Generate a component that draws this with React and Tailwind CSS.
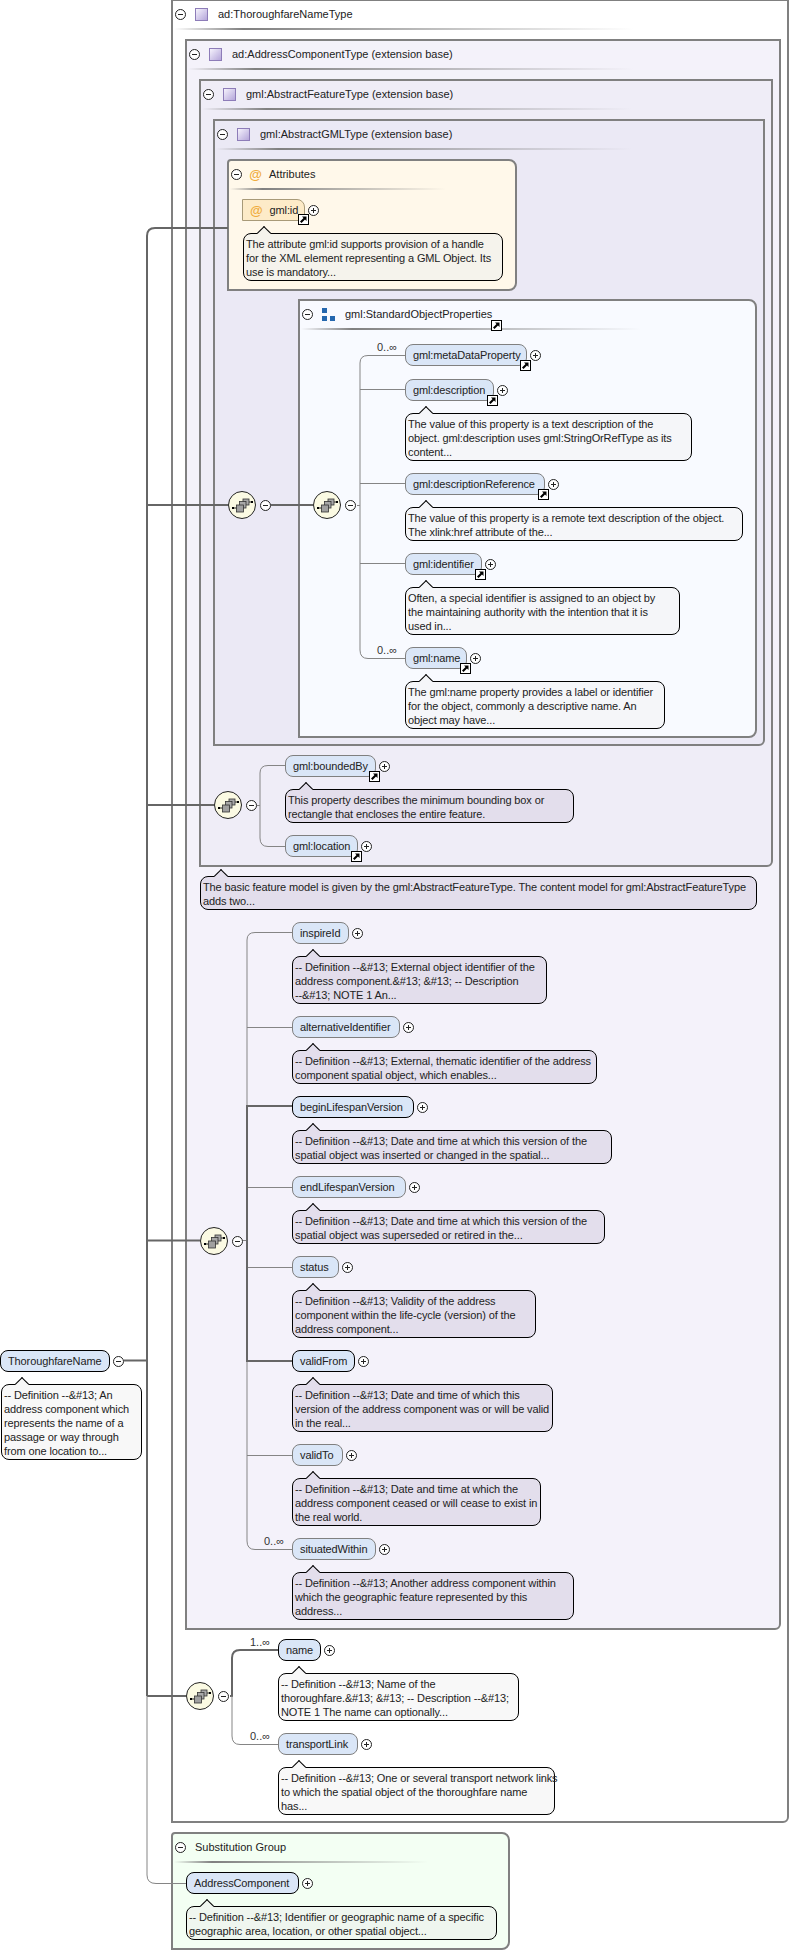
import React from "react";

function Toggle({ plus, className = "" }) {
  return (
    <svg width="11" height="11" viewBox="0 0 11 11" className={"shrink-0 " + className}>
      <circle cx="5.5" cy="5.5" r="5" fill="#ffffff" stroke="#222222" strokeWidth="1" />
      <path d="M3 5.5H8" stroke="#222222" strokeWidth="1" />
      {plus && <path d="M5.5 3V8" stroke="#222222" strokeWidth="1" />}
    </svg>
  );
}

function Shortcut({ className = "" }) {
  return (
    <svg width="11" height="11" viewBox="0 0 11 11" className={className}>
      <rect x="0.5" y="0.5" width="10" height="10" fill="#ffffff" stroke="#000000" />
      <path d="M4 2.5H8.5V7L7 5.5L3.5 9L2 7.5L5.5 4Z" fill="#000000" />
    </svg>
  );
}

function TypeIcon() {
  return (
    <span className="block h-[13px] w-[13px] shrink-0 border border-[#8d7cb8] bg-gradient-to-br from-[#f6f3fc] to-[#b5a6da]" />
  );
}

function GroupIcon() {
  return (
    <svg width="13" height="13" viewBox="0 0 13 13" className="shrink-0">
      <rect x="0" y="0" width="5" height="5" fill="#2467ae" />
      <rect x="0" y="8" width="5" height="5" fill="#2467ae" />
      <rect x="8" y="8" width="5" height="5" fill="#2467ae" />
    </svg>
  );
}

function Header({ icon, title, sep, arrow, gap = "gap-[10px]" }) {
  return (
    <div className="h-[38px]">
      <div className="relative flex h-[26px] items-center">
        <Toggle className="ml-[2px]" />
        <div className={"ml-[9px] flex items-center " + gap}>
          {icon}
          <span className="whitespace-pre pt-[1px] text-[11px] text-[#222222]">{title}</span>
          {arrow}
        </div>
      </div>
      <div className={"ml-[1px] mt-[1px] h-[2px] bg-gradient-to-r from-transparent via-[#808080] via-[15%] to-transparent " + sep} />
    </div>
  );
}

function Desc({ text, width, fill }) {
  return (
    <div className={"relative rounded-[8px] border border-black px-[2px] pb-[1px] pt-[3px] text-[11px] leading-[14px] tracking-[-0.12px] whitespace-pre text-[#222222] " + width + " " + fill}>
      <span className="absolute left-[15px] -top-[6px] h-[10px] w-[10px] rotate-45 border-l border-t border-black bg-inherit" />
      <span className="relative">{text}</span>
    </div>
  );
}

function Pill({ name, required, arrow, card, w }) {
  return (
    <div className="flex h-[22px] items-center">
      <div
        className={
          "relative flex h-[22px] items-center rounded-[8px] border bg-[#dae6f7] pl-[7px] pt-[1px] text-[11px] tracking-[-0.12px] whitespace-pre text-[#222222] " +
          w +
          " " +
          (required ? "border-black" : "border-[#808080]")
        }
      >
        {card && (
          <span className="absolute -left-[29px] -top-[5px] text-[11px] leading-[14px] tracking-normal text-[#333333]">{card}</span>
        )}
        {name}
        {arrow && <Shortcut className="absolute -right-[5px] -bottom-[6px]" />}
      </div>
      <Toggle plus className="ml-[3px]" />
    </div>
  );
}

function Item({ name, required, arrow, card, w, desc, width, fill, last, tight }) {
  return (
    <div className={last ? "" : tight ? "mb-[13px]" : "mb-[12px]"}>
      <Pill name={name} required={required} arrow={arrow} card={card} w={w} />
      {desc && (
        <div className="mt-[12px]">
          <Desc text={desc} width={width} fill={fill} />
        </div>
      )}
    </div>
  );
}

function Compositor({ className = "" }) {
  return (
    <div className={"flex shrink-0 items-center " + className}>
      <svg width="28" height="28" viewBox="0 0 28 28">
        <circle cx="14" cy="14" r="13.5" fill="#fbfae3" stroke="#222222" />
        <path d="M5 17H9M20 11H24" stroke="#222222" />
        <rect x="15" y="8" width="6" height="6" fill="#a8a8a8" stroke="#333333" strokeWidth="0.8" />
        <rect x="11.5" y="10.5" width="6.5" height="6.5" fill="#a8a8a8" stroke="#333333" strokeWidth="0.8" />
        <rect x="8.5" y="14" width="7" height="7" fill="#a0a0a0" stroke="#333333" strokeWidth="0.8" />
        <rect x="4" y="16" width="2" height="2" fill="#000000" />
        <rect x="23" y="10" width="2" height="2" fill="#000000" />
      </svg>
      <Toggle className="ml-[4px]" />
    </div>
  );
}

function Connectors() {
  const dark = { fill: "none", stroke: "#666666", strokeWidth: 2 };
  const thin = { fill: "none", stroke: "#858585", strokeWidth: 1 };
  return (
    <svg width="790" height="1952" className="pointer-events-none absolute left-0 top-0">
      {/* main trunk */}
      <path d="M124 1360.5H147M228 228H155Q147 228 147 236V1696" {...dark} />
      <path d="M147 505H228M147 805H214M147 1240.5H200M147 1696H186" {...dark} />
      <path d="M147 1696V1875Q147 1883.5 156 1883.5H186" {...thin} />
      {/* base type sequences */}
      <path d="M271 505H313" {...dark} />
      <path d="M357 505.5H360M405 355.5H368Q360 355.5 360 363V650Q360 658.5 368 658.5H405M360 389.5H405M360 483.5H405M360 563.5H405" {...thin} />
      <path d="M257 805.5H260M285 765.5H268Q260 765.5 260 773V838Q260 846.5 268 846.5H285" {...thin} />
      <path d="M243 1240.5H247M292 932.5H255Q247 932.5 247 940V1541Q247 1549.5 255 1549.5H292M247 1027.5H292M247 1187.5H292M247 1267.5H292M247 1455.5H292" {...thin} />
      <path d="M292 1106H247V1361H292" {...dark} />
      {/* own sequence */}
      <path d="M230 1696H232V1658Q232 1650 240 1650H278" {...dark} />
      <path d="M232 1696V1736Q232 1744.5 240 1744.5H278" {...thin} />
    </svg>
  );
}

const whiteNote = "bg-[#f8f8f8]";
const lilacNote = "bg-[#e3deec]";
const attrNote = "bg-[#f5f3ec]";
const sopNote = "bg-[#f5f6f9]";

export default function App() {
  return (
    <div className="relative flex h-[1952px] w-[790px] overflow-hidden bg-white [font-family:'Liberation_Sans',sans-serif]">
      {/* global element */}
      <div className="w-[171px] shrink-0 pt-[1350px]">
        <div className="flex h-[22px] items-center">
          <div className="flex h-[22px] w-[110px] items-center rounded-[8px] border border-black bg-[#dae6f7] pl-[7px] pt-[1px] text-[11px] tracking-[-0.12px] text-[#222222]">
            ThoroughfareName
          </div>
          <Toggle className="ml-[3px]" />
        </div>
        <div className="ml-[1px] mt-[12px]">
          <Desc
            width="w-[141px]"
            fill={whiteNote}
            text={"-- Definition --&#13; An\naddress component which\nrepresents the name of a\npassage or way through\nfrom one location to..."}
          />
        </div>
      </div>

      <div className="-mt-px shrink-0">
        {/* ad:ThoroughfareNameType */}
        <div className="w-[618px] rounded-br-[6px] border-2 border-[#808080] bg-white pb-[6px]">
          <Header icon={<TypeIcon />} title="ad:ThoroughfareNameType" sep="w-[460px]" />

          {/* ad:AddressComponentType */}
          <div className="ml-[12px] w-[596px] rounded-br-[6px] border-2 border-[#808080] bg-[#f4f2fa] pb-[8px]">
            <Header icon={<TypeIcon />} title="ad:AddressComponentType (extension base)" sep="w-[446px]" />

            {/* gml:AbstractFeatureType */}
            <div className="ml-[12px] w-[574px] rounded-br-[6px] border-2 border-[#808080] bg-[#efedf7] pb-[8px]">
              <Header icon={<TypeIcon />} title="gml:AbstractFeatureType (extension base)" sep="w-[430px]" />

              {/* gml:AbstractGMLType */}
              <div className="ml-[12px] w-[552px] rounded-br-[6px] border-2 border-[#808080] bg-[#ebe9f5] pb-[6px]">
                <Header icon={<TypeIcon />} title="gml:AbstractGMLType (extension base)" sep="w-[416px]" />

                {/* Attributes */}
                <div className="ml-[12px] h-[132px] w-[290px] rounded-tl-[4px] rounded-r-[8px] border-2 border-[#808080] bg-[#fff8ea]">
                  <Header
                    icon={<span className="-ml-[2px] w-[13px] shrink-0 text-center text-[13px] font-bold leading-none text-[#f0ac3c]">@</span>}
                    title="Attributes"
                    sep="w-[216px]"
                    gap="gap-[7px]"
                  />
                  <div className="ml-[13px] flex h-[22px] items-center">
                    <div className="relative flex h-[22px] w-[63px] items-center gap-[7px] rounded-tr-[8px] border border-[#a89a78] bg-[#fdebc8] pl-[7px] pt-[1px] text-[11px] tracking-[-0.12px] text-[#222222]">
                      <span className="text-[13px] font-bold leading-none text-[#f0ac3c]">@</span>
                      gml:id
                      <Shortcut className="absolute -right-[5px] -bottom-[5px]" />
                    </div>
                    <Toggle plus className="ml-[3px]" />
                  </div>
                  <div className="ml-[14px] mt-[12px]">
                    <Desc
                      width="w-[260px]"
                      fill={attrNote}
                      text={"The attribute gml:id supports provision of a handle\nfor the XML element representing a GML Object. Its\nuse is mandatory..."}
                    />
                  </div>
                </div>

                <div className="mt-[8px] flex items-start">
                  <Compositor className="ml-[13px] mt-[192px]" />

                  {/* gml:StandardObjectProperties */}
                  <div className="ml-[27px] w-[459px] rounded-tr-[8px] rounded-br-[8px] border-2 border-[#808080] bg-[#f8faff] pb-[7px]">
                    <Header
                      icon={<GroupIcon />}
                      title="gml:StandardObjectProperties"
                      sep="w-[340px]"
                      arrow={<Shortcut className="-ml-[11px] mt-[23px]" />}
                    />
                    <div className="flex items-start">
                      <Compositor className="ml-[13px] mt-[152px]" />
                      <div className="ml-[49px] pt-[5px]">
                        <Item tight arrow name="gml:metaDataProperty" card="0..∞" w="w-[122px]" />
                        <Item
                          arrow
                          name="gml:description"
                          w="w-[89px]"
                          width="w-[287px]"
                          fill={sopNote}
                          desc={"The value of this property is a text description of the\nobject. gml:description uses gml:StringOrRefType as its\ncontent..."}
                        />
                        <Item
                          arrow
                          name="gml:descriptionReference"
                          w="w-[140px]"
                          width="w-[338px]"
                          fill={sopNote}
                          desc={"The value of this property is a remote text description of the object.\nThe xlink:href attribute of the..."}
                        />
                        <Item
                          arrow
                          name="gml:identifier"
                          w="w-[77px]"
                          width="w-[275px]"
                          fill={sopNote}
                          desc={"Often, a special identifier is assigned to an object by\nthe maintaining authority with the intention that it is\nused in..."}
                        />
                        <Item
                          last
                          arrow
                          name="gml:name"
                          card="0..∞"
                          w="w-[62px]"
                          width="w-[260px]"
                          fill={sopNote}
                          desc={"The gml:name property provides a label or identifier\nfor the object, commonly a descriptive name. An\nobject may have..."}
                        />
                      </div>
                    </div>
                  </div>
                </div>
              </div>

              <div className="mt-[9px] flex items-start">
                <Compositor className="ml-[13px] mt-[36px]" />
                <div className="ml-[28px]">
                  <Item
                    arrow
                    name="gml:boundedBy"
                    w="w-[91px]"
                    width="w-[289px]"
                    fill={lilacNote}
                    desc={"This property describes the minimum bounding box or\nrectangle that encloses the entire feature."}
                  />
                  <Item last arrow name="gml:location" w="w-[73px]" />
                </div>
              </div>
            </div>

            <div className="ml-[13px] mt-[9px]">
              <Desc
                width="w-[557px]"
                fill={lilacNote}
                text={"The basic feature model is given by the gml:AbstractFeatureType. The content model for gml:AbstractFeatureType\nadds two..."}
              />
            </div>

            <div className="mt-[12px] flex items-start">
              <Compositor className="ml-[13px] mt-[305px]" />
              <div className="ml-[49px]">
                <Item
                  name="inspireId"
                  w="w-[57px]"
                  width="w-[255px]"
                  fill={lilacNote}
                  desc={"-- Definition --&#13; External object identifier of the\naddress component.&#13; &#13; -- Description\n--&#13; NOTE 1 An..."}
                />
                <Item
                  name="alternativeIdentifier"
                  w="w-[108px]"
                  width="w-[305px]"
                  fill={lilacNote}
                  desc={"-- Definition --&#13; External, thematic identifier of the address\ncomponent spatial object, which enables..."}
                />
                <Item
                  required
                  name="beginLifespanVersion"
                  w="w-[122px]"
                  width="w-[320px]"
                  fill={lilacNote}
                  desc={"-- Definition --&#13; Date and time at which this version of the\nspatial object was inserted or changed in the spatial..."}
                />
                <Item
                  name="endLifespanVersion"
                  w="w-[114px]"
                  width="w-[313px]"
                  fill={lilacNote}
                  desc={"-- Definition --&#13; Date and time at which this version of the\nspatial object was superseded or retired in the..."}
                />
                <Item
                  name="status"
                  w="w-[47px]"
                  width="w-[244px]"
                  fill={lilacNote}
                  desc={"-- Definition --&#13; Validity of the address\ncomponent within the life-cycle (version) of the\naddress component..."}
                />
                <Item
                  required
                  name="validFrom"
                  w="w-[63px]"
                  width="w-[261px]"
                  fill={lilacNote}
                  desc={"-- Definition --&#13; Date and time of which this\nversion of the address component was or will be valid\nin the real..."}
                />
                <Item
                  name="validTo"
                  w="w-[51px]"
                  width="w-[249px]"
                  fill={lilacNote}
                  desc={"-- Definition --&#13; Date and time at which the\naddress component ceased or will cease to exist in\nthe real world."}
                />
                <Item
                  last
                  name="situatedWithin"
                  card="0..∞"
                  w="w-[84px]"
                  width="w-[282px]"
                  fill={lilacNote}
                  desc={"-- Definition --&#13; Another address component within\nwhich the geographic feature represented by this\naddress..."}
                />
              </div>
            </div>
          </div>

          <div className="mt-[9px] flex items-start">
            <Compositor className="ml-[13px] mt-[43px]" />
            <div className="ml-[49px]">
              <Item
                required
                name="name"
                card="1..∞"
                w="w-[43px]"
                width="w-[241px]"
                fill={whiteNote}
                desc={"-- Definition --&#13; Name of the\nthoroughfare.&#13; &#13; -- Description --&#13;\nNOTE 1 The name can optionally..."}
              />
              <Item
                last
                name="transportLink"
                card="0..∞"
                w="w-[80px]"
                width="w-[277px]"
                fill={whiteNote}
                desc={"-- Definition --&#13; One or several transport network links\nto which the spatial object of the thoroughfare name\nhas..."}
              />
            </div>
          </div>
        </div>

        {/* Substitution Group */}
        <div className="mt-[9px] h-[118px] w-[339px] rounded-tl-[4px] rounded-r-[8px] border-2 border-[#808080] bg-[#f3fff3]">
          <Header title="Substitution Group" sep="w-[254px]" />
          <div className="ml-[13px]">
            <Pill required name="AddressComponent" w="w-[113px]" />
            <div className="mt-[12px]">
              <Desc
                width="w-[311px]"
                fill="bg-[#eff6ef]"
                text={"-- Definition --&#13; Identifier or geographic name of a specific\ngeographic area, location, or other spatial object..."}
              />
            </div>
          </div>
        </div>
      </div>

      <Connectors />
    </div>
  );
}
